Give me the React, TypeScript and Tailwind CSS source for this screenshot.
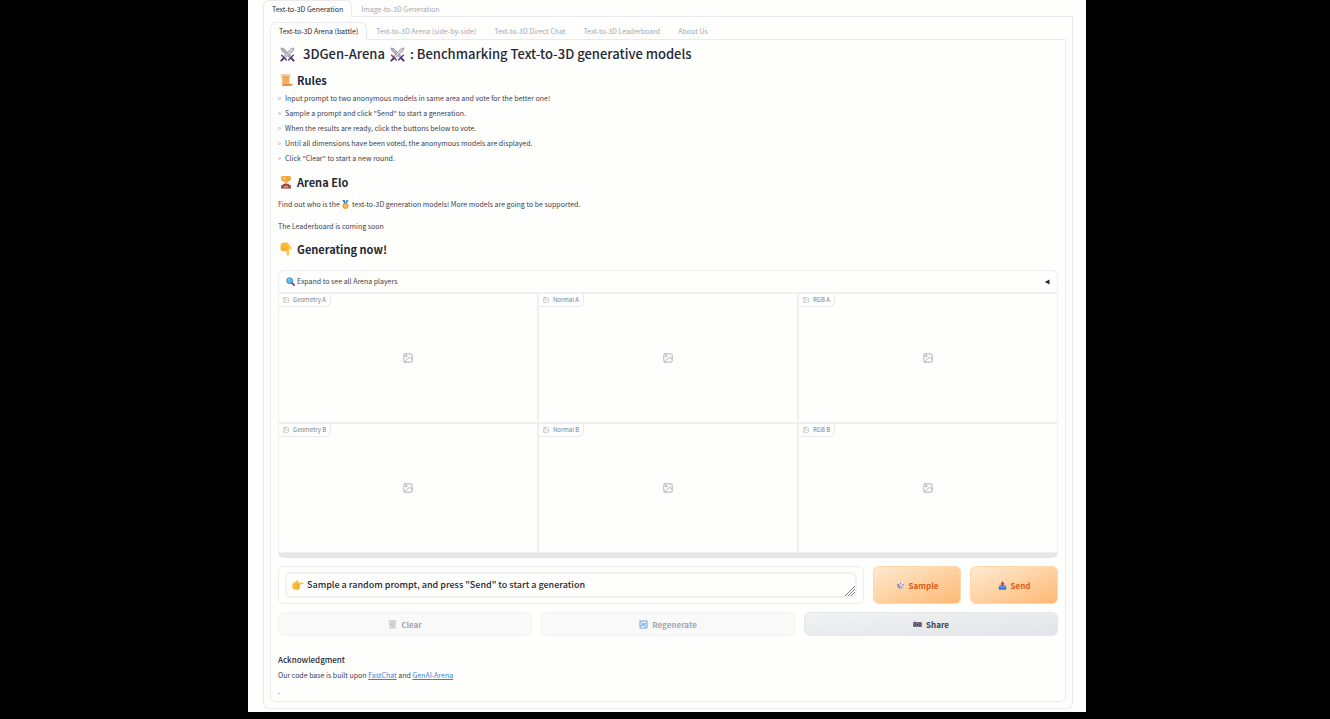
import React, { useState } from "react";

type IconProps = { className?: string };

function Swords({ className }: IconProps) {
  return (
    <svg viewBox="0 0 16 16" className={className} aria-hidden="true">
      <path d="M1 1l3 .6 8 8.4-1.6 1.5L2 4z" fill="#b9b5c6" stroke="#77728c" strokeWidth=".6" />
      <path d="M15 1l-3 .6-8 8.4 1.6 1.5L14 4z" fill="#d3d0dc" stroke="#77728c" strokeWidth=".6" />
      <path d="M1.8 8.8l5 5M14.2 8.8l-5 5" stroke="#5b4180" strokeWidth="1.6" strokeLinecap="round" />
      <path d="M4 12l-2.6 2.6M12 12l2.6 2.6" stroke="#4b3470" strokeWidth="2" strokeLinecap="round" />
    </svg>
  );
}

function Scroll({ className }: IconProps) {
  return (
    <svg viewBox="0 0 16 16" className={className} aria-hidden="true">
      <path d="M3 2h9v12H4z" fill="#f5b56c" />
      <path d="M2 3.2C2 1.8 3 1.4 4 1.4h7.6c1 0 1.6.6 1.6 1.6s-.6 1.6-1.6 1.6h-8C2.600 4.600 2 4 2 3.200z" fill="#fbc988" />
      <path d="M4.200 4.600h7.800" stroke="#c9803c" strokeWidth=".8" />
      <path d="M4 12.200h10.400c.8 0 1 .6 1 1.200s-.6 1.400-1.600 1.400H5c-1 0-1.600-.8-1.600-1.400z" fill="#e69448" />
      <path d="M5.500 6.800h5M5.500 9h5" stroke="#d9924d" strokeWidth=".7" />
    </svg>
  );
}

function Trophy({ className }: IconProps) {
  return (
    <svg viewBox="0 0 16 16" className={className} aria-hidden="true">
      <path d="M4.500 2.500H3c0 2.500 1 4 2.600 4.400M11.500 2.500H13c0 2.500-1 4-2.600 4.400" fill="none" stroke="#e99a2c" strokeWidth="1.300" />
      <path d="M4 1h8c0 4-1 7-3.200 7.600v2.600H7.200V8.600C5 8 4 5 4 1z" fill="#f8a534" />
      <path d="M5.200 2h2v5c-1.400-1-2-2.600-2-5z" fill="#ffd06f" />
      <path d="M5 10h6l.8 1.500H4.200z" fill="#a9473a" />
      <path d="M2.500 11.500h11v4h-11z" fill="#9c4240" />
      <path d="M5.500 12.600h5v1.600h-5z" fill="#d7a091" />
    </svg>
  );
}

function Medal({ className }: IconProps) {
  return (
    <svg viewBox="0 0 16 16" className={className} aria-hidden="true">
      <path d="M2.500 0h4l3 7-3 1.500z" fill="#3f78c9" />
      <path d="M13.500 0h-4l-3 7 3 1.500z" fill="#5b93dc" />
      <circle cx="8" cy="10.500" r="5.200" fill="#f0982c" />
      <circle cx="8" cy="10.500" r="3" fill="#fbc560" />
    </svg>
  );
}

function Hand({ className }: IconProps) {
  return (
    <svg viewBox="0 0 16 16" className={className} aria-hidden="true">
      <path
        d="M.5 8C.5 6 1.800 5 3.200 4.200L6.500 2c1-.7 2.400.3 1.900 1.400L8 4.600h6.200c1.700 0 1.700 2.500 0 2.500H10c1 .3 1 1.700.1 2 .8.400.7 1.600-.2 1.900.6.500.3 1.500-.5 1.700.3.900-.3 1.600-1.200 1.600H4.800C2.200 14.300.5 12.500.5 10z"
        fill="#fdb932"
      />
      <path d="M7 7.100h3M6.800 9.100h3.300M6.800 11h3.100M6.600 12.700h2.800" fill="none" stroke="#ee9326" strokeWidth=".6" strokeLinecap="round" />
      <path d="M3 6c1.500-.6 3-1.500 4.200-3M9 5.600h5" fill="none" stroke="#ffdb67" strokeWidth=".9" strokeLinecap="round" />
    </svg>
  );
}

function Magnifier({ className }: IconProps) {
  return (
    <svg viewBox="0 0 16 16" className={className} aria-hidden="true">
      <path d="M10 10l4.500 4.500" stroke="#593a73" strokeWidth="2.800" strokeLinecap="round" />
      <circle cx="6.500" cy="6.500" r="5.200" fill="#55bdf0" stroke="#437aa5" strokeWidth="1.500" />
      <path d="M3.800 6c.2-1.400 1.200-2.200 2.500-2.400" stroke="#c5edff" strokeWidth="1.300" fill="none" />
    </svg>
  );
}

function Die({ className }: IconProps) {
  return (
    <svg viewBox="0 0 16 16" className={className} aria-hidden="true">
      <path d="M8 .8l6.500 3L8 7.200 1.500 3.800z" fill="#e9e6f4" />
      <path d="M1.500 3.800L8 7.200v8L2.500 11.500z" fill="#aaa5cf" />
      <path d="M14.500 3.800L8 7.200v8l5.500-3.700z" fill="#d0cce6" />
      <circle cx="8" cy="3.900" r="1.100" fill="#6a5a96" />
      <circle cx="3.800" cy="7" r=".9" fill="#54468a" />
      <circle cx="6" cy="11.200" r=".9" fill="#54468a" />
      <circle cx="10" cy="11.500" r=".9" fill="#54468a" />
      <circle cx="12.500" cy="6.800" r=".9" fill="#54468a" />
    </svg>
  );
}

function Outbox({ className }: IconProps) {
  return (
    <svg viewBox="0 0 16 16" className={className} aria-hidden="true">
      <path d="M3 6.500h10l1.500 4V15h-13v-4.500z" fill="#5aa2ea" />
      <path d="M1.500 10.500H5l1 1.800h4l1-1.800h3.500V15h-13z" fill="#2f76cf" />
      <path d="M8 .5L11.500 5H9.800v4.500H6.200V5H4.500z" fill="#cc3159" />
    </svg>
  );
}

function Bin({ className }: IconProps) {
  return (
    <svg viewBox="0 0 16 16" className={className} aria-hidden="true">
      <path d="M1 .5h14v2.500H1z" fill="#c9c7cd" />
      <path d="M1.600 3h12.800l-.6 12.500H2.200z" fill="#d9d8dd" />
      <path d="M4.500 5l5 9M8 4l3.500 6M11.500 5l-5 9M8 4l-3.500 6" stroke="#b8b6be" strokeWidth=".8" />
    </svg>
  );
}

function Refresh({ className }: IconProps) {
  return (
    <svg viewBox="0 0 16 16" className={className} aria-hidden="true">
      <rect x=".5" y=".5" width="15" height="15" rx="2" fill="#9bbfe9" />
      <path d="M4 8.500V6.500C4 5 5 4 6.500 4h4M12 7.500v2c0 1.500-1 2.500-2.500 2.500h-4" fill="none" stroke="#fff" strokeWidth="1.500" />
      <path d="M9.500 2l3 2-3 2zM6.500 10l-3 2 3 2z" fill="#fff" />
    </svg>
  );
}

function Camera({ className }: IconProps) {
  return (
    <svg viewBox="0 0 18 12" className={className} aria-hidden="true">
      <path d="M2 1.500h3.500V3H2z" fill="#51465e" />
      <rect x=".5" y="2.500" width="17" height="9" rx="1" fill="#4b4357" />
      <path d="M.5 5h17" stroke="#8c8498" strokeWidth=".8" />
      <circle cx="9" cy="7.300" r="3.200" fill="#9b94a8" />
      <circle cx="9" cy="7.300" r="1.800" fill="#352d45" />
      <path d="M13.500 6.500h2.200v2.500h-2.200zM2.500 6.500h2.200v2.500H2.500z" fill="#887f93" />
    </svg>
  );
}

function ImageIcon({ className }: IconProps) {
  return (
    <svg
      viewBox="0 0 24 24"
      className={className}
      fill="none"
      stroke="currentColor"
      strokeWidth="2"
      strokeLinecap="round"
      strokeLinejoin="round"
      aria-hidden="true"
    >
      <rect x="2" y="2" width="20" height="20" rx="3" />
      <circle cx="7.500" cy="7.500" r="1.500" />
      <path d="M22 15l-6-5L3.500 21.500" />
    </svg>
  );
}

const outerTabs = ["Text-to-3D Generation", "Image-to-3D Generation"];
const innerTabs = [
  "Text-to-3D Arena (battle)",
  "Text-to-3D Arena (side-by-side)",
  "Text-to-3D Direct Chat",
  "Text-to-3D Leaderboard",
  "About Us",
];
const rules = [
  "Input prompt to two anonymous models in same area and vote for the better one!",
  'Sample a prompt and click "Send" to start a generation.',
  "When the results are ready, click the buttons below to vote.",
  "Until all dimensions have been voted, the anonymous models are displayed.",
  'Click "Clear" to start a new round.',
];
const views = ["Geometry A", "Normal A", "RGB A", "Geometry B", "Normal B", "RGB B"];

function Tabs({ items, label, height }: { items: string[]; label: string; height: string }) {
  return (
    <div role="tablist" aria-label={label} className={`flex ${height}`}>
      {items.map((item, i) => (
        <button
          key={item}
          type="button"
          role="tab"
          aria-selected={i === 0}
          className={
            i === 0
              ? "-mb-px rounded-t-md border border-b-0 border-[#e9eaee] bg-[#fefefd] px-2 text-[#1f2937]"
              : "-mb-px border-t border-transparent px-[9px] text-[#a3a8b3]"
          }
        >
          {item}
        </button>
      ))}
    </div>
  );
}

function SectionTitle({ icon, children }: { icon: React.ReactNode; children: React.ReactNode }) {
  return (
    <h2 className="flex items-center gap-1 pl-px text-[11px] leading-[18px] font-semibold text-[#1f2937]">
      {icon}
      {children}
    </h2>
  );
}

function Viewer({ label }: { label: string }) {
  return (
    <figure className="relative flex h-[130px] items-center justify-center border border-[#efeff1] bg-[#fefefd] text-[#9ca3af]">
      <figcaption className="absolute top-0 left-0 flex h-[13px] items-center gap-1 rounded-br-md border-r border-b border-[#e9eaee] px-1 text-[6px] leading-[12px] text-[#7b818c]">
        <ImageIcon className="size-[6px] text-[#a9adb6]" />
        {label}
      </figcaption>
      <ImageIcon className="size-[10px]" />
    </figure>
  );
}

export default function App() {
  const [prompt, setPrompt] = useState('Sample a random prompt, and press "Send" to start a generation');

  return (
    <div className="min-h-screen bg-black pl-1 font-['Noto_Sans_CJK_SC',sans-serif] text-[7px] leading-[15px] text-[#374151]">
      <main className="mx-auto w-full max-w-[838px] bg-[#fefefd] pr-[13px] pb-[3px] pl-[15px]">
        <Tabs items={outerTabs} label="Generation type" height="h-4" />
        <div className="rounded-b-md border border-[#e9eaee] px-[6px] pt-[5px] pb-[6px]">
          <Tabs items={innerTabs} label="Text-to-3D pages" height="h-[17px]" />
          <div className="rounded-b-md border border-[#e9eaee] px-[7px] pt-1 pb-[2px]">
            <h1 className="flex items-center text-[13px] leading-5 font-medium text-[#1f2937]">
              <Swords className="mr-2 ml-[2px] size-[15px]" />
              3DGen-Arena
              <Swords className="mx-[5px] size-[15px]" />
              : Benchmarking Text-to-3D generative models
            </h1>

            <div className="mt-[7px]">
              <SectionTitle icon={<Scroll className="size-[14px]" />}>Rules</SectionTitle>
            </div>
            <ul className="mt-[2px]">
              {rules.map((rule) => (
                <li key={rule} className="flex items-center gap-1">
                  <span className="size-[3px] rounded-full border border-[#b9bdc6]" />
                  {rule}
                </li>
              ))}
            </ul>

            <div className="mt-[7px]">
              <SectionTitle icon={<Trophy className="size-[14px]" />}>Arena Elo</SectionTitle>
            </div>
            <p className="mt-[6px]">
              Find out who is the <Medal className="inline size-[9px] align-[-2px]" /> text-to-3D generation models! More
              models are going to be supported.
            </p>
            <p className="mt-[7px]">The Leaderboard is coming soon</p>

            <div className="mt-[6px]">
              <SectionTitle icon={<Hand className="size-[14px] rotate-90" />}>Generating now!</SectionTitle>
            </div>

            <section className="mt-3 overflow-hidden rounded-md bg-[#e4e6ea] pb-[5px]">
              <button
                type="button"
                aria-expanded="false"
                className="flex h-[23px] w-full items-center gap-[2px] rounded-t-md border border-[#efeff1] bg-[#fefefd] px-[7px]"
              >
                <Magnifier className="size-[9px]" />
                <span>Expand to see all Arena players</span>
                <svg viewBox="0 0 6 6" className="ml-auto size-[6px]" aria-hidden="true">
                  <path d="M5.500 .5v5L.8 3z" fill="#1f2937" />
                </svg>
              </button>
              <div className="grid grid-cols-3">
                {views.map((view) => (
                  <Viewer key={view} label={view} />
                ))}
              </div>
            </section>

            <div className="mt-2 flex gap-[9px]">
              <div className="flex h-[38px] flex-1 items-center rounded-md border border-[#ececef] px-[6px]">
                <div className="relative flex h-[26px] flex-1 items-center gap-[3px] rounded-md border-2 border-[#f1f1f3] px-[5px]">
                  <Hand className="size-3" />
                  <textarea
                    aria-label="Prompt"
                    rows={1}
                    value={prompt}
                    onChange={(e) => setPrompt(e.target.value)}
                    className="h-4 flex-1 resize-none overflow-hidden bg-transparent text-[9px] leading-4 font-medium text-[#1f2937] outline-none"
                  />
                  <svg viewBox="0 0 10 10" className="absolute right-0 bottom-0 size-[10px]" aria-hidden="true">
                    <path d="M0 10L10 0M3 10l7-7M6 10l4-4" stroke="#555b63" strokeWidth=".8" />
                  </svg>
                </div>
              </div>
              <button
                type="button"
                className="flex w-[88px] items-center justify-center gap-1 rounded-md border border-[#fed7aa] bg-linear-to-br from-[#ffead0] to-[#fdb871] text-[8px] font-semibold text-[#dc5a14]"
              >
                <Die className="size-[9px]" />
                Sample
              </button>
              <button
                type="button"
                className="flex w-[88px] items-center justify-center gap-1 rounded-md border border-[#fed7aa] bg-linear-to-br from-[#ffead0] to-[#fdb871] text-[8px] font-semibold text-[#dc5a14]"
              >
                <Outbox className="size-[9px]" />
                Send
              </button>
            </div>

            <div className="mt-2 grid grid-cols-3 gap-[9px] text-[8px] font-semibold">
              <button
                type="button"
                disabled
                className="flex h-6 items-center justify-center gap-1 rounded-md border border-[#f2f2f3] bg-[#f9f9f9] text-[#a3a8b0]"
              >
                <Bin className="size-[9px]" />
                Clear
              </button>
              <button
                type="button"
                disabled
                className="flex h-6 items-center justify-center gap-1 rounded-md border border-[#f2f2f3] bg-[#f9f9f9] text-[#a3a8b0]"
              >
                <Refresh className="size-[9px]" />
                Regenerate
              </button>
              <button
                type="button"
                className="flex h-6 items-center justify-center gap-1 rounded-md border border-[#e5e7eb] bg-linear-to-br from-[#f1f2f3] to-[#e2e4e8] text-[#374151]"
              >
                <Camera className="h-[6px] w-[9px]" />
                Share
              </button>
            </div>

            <h3 className="mt-4 text-[8px] font-medium text-[#1f2937]">Acknowledgment</h3>
            <p className="mt-px">
              Our code base is built upon{" "}
              <a href="#fastchat" className="text-[#3b82d6] underline">
                FastChat
              </a>{" "}
              and{" "}
              <a href="#genai-arena" className="text-[#3b82d6] underline">
                GenAI-Arena
              </a>
            </p>
            <p className="mt-px">.</p>
          </div>
        </div>
      </main>
    </div>
  );
}
